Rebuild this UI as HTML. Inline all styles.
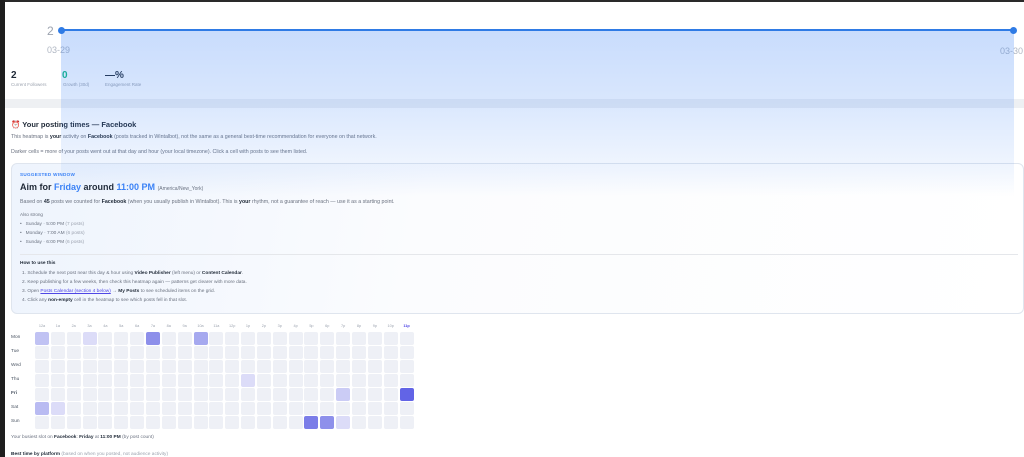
<!DOCTYPE html>
<html><head><meta charset="utf-8"><style>
*{margin:0;padding:0;box-sizing:border-box}
body{width:1024px;height:457px;overflow:hidden;background:#fff;font-family:"Liberation Sans",sans-serif;color:#374151;position:relative}
.a{position:absolute;white-space:nowrap}
.s{font-size:5.3px;color:#6b7280}
b{color:#1f2937}
.cell{position:absolute;width:14px;height:13px;border-radius:2px;background:#eef0f6}
</style></head><body>
<div class="a" style="left:0;top:0;width:1024px;height:2px;background:#2a2a2a"></div>
<div class="a" style="left:0;top:0;width:5px;height:457px;background:#1e1e1e"></div>
<div class="a" style="left:5px;top:99px;width:1019px;height:9px;background:#eef0f3"></div>

<div class="a" style="left:47px;top:24px;font-size:12px;color:#9ca3af">2</div>
<div class="a" style="left:47px;top:45px;font-size:9px;color:#b0b7c3">03-29</div>
<div class="a" style="left:1000px;top:46px;font-size:9px;color:#b0b7c3">03-30</div>

<div class="a" style="left:11px;top:70px;font-size:10px;font-weight:bold;color:#1f2937">2</div>
<div class="a" style="left:62px;top:70px;font-size:10px;font-weight:bold;color:#10b981">0</div>
<div class="a" style="left:105px;top:70px;font-size:10px;font-weight:bold;color:#1f2937">—%</div>
<div class="a s" style="left:11px;top:82px;font-size:4.5px;color:#9ca3af">Current Followers</div>
<div class="a s" style="left:63px;top:82px;font-size:4.5px;color:#9ca3af">Growth (30d)</div>
<div class="a s" style="left:105px;top:82px;font-size:4.5px;color:#9ca3af">Engagement Rate</div>

<div class="a" style="left:11px;top:120px;font-size:7.5px;font-weight:bold;color:#1f2937"><span style="color:#e11d48">⏰</span> Your posting times — Facebook</div>
<div class="a s" style="left:11px;top:134px">This heatmap is <b>your</b> activity on <b>Facebook</b> (posts tracked in Wintalbot), not the same as a general best-time recommendation for everyone on that network.</div>
<div class="a s" style="left:11px;top:149px">Darker cells = more of your posts went out at that day and hour (your local timezone). Click a cell with posts to see them listed.</div>

<div class="a" style="left:11px;top:163px;width:1013px;height:151px;border:1px solid #dfe5ee;border-radius:6px;background:linear-gradient(100deg,#eef4fd,#fbfcfe 40%,#fff)"></div>
<div class="a" style="left:20px;top:172px;font-size:4.6px;font-weight:bold;color:#3b82f6;letter-spacing:.3px">SUGGESTED WINDOW</div>
<div class="a" style="left:20px;top:182px;font-size:9px;font-weight:bold;color:#1f2937">Aim for <span style="color:#3b82f6">Friday</span> around <span style="color:#3b82f6">11:00 PM</span> <span style="font-size:5px;font-weight:normal;color:#6b7280">(America/New_York)</span></div>
<div class="a s" style="left:20px;top:199px">Based on <b>45</b> posts we counted for <b>Facebook</b> (when you usually publish in Wintalbot). This is <b>your</b> rhythm, not a guarantee of reach — use it as a starting point.</div>
<div class="a s" style="left:20px;top:212px;font-size:4.6px">Also strong</div>
<div class="a s" style="left:20px;top:222px;font-size:4.8px">•&nbsp;&nbsp; Sunday · 5:00 PM <span style="color:#9ca3af">(7 posts)</span></div>
<div class="a s" style="left:20px;top:231px;font-size:4.8px">•&nbsp;&nbsp; Monday · 7:00 AM <span style="color:#9ca3af">(6 posts)</span></div>
<div class="a s" style="left:20px;top:240px;font-size:4.8px">•&nbsp;&nbsp; Sunday · 6:00 PM <span style="color:#9ca3af">(6 posts)</span></div>
<div class="a" style="left:20px;top:254px;width:998px;height:1px;background:#e5e7eb"></div>
<div class="a" style="left:20px;top:261px;font-size:4.8px;font-weight:bold;color:#1f2937">How to use this</div>
<div class="a s" style="left:22px;top:271px;font-size:4.8px">1. Schedule the next post near this day &amp; hour using <b>Video Publisher</b> (left menu) or <b>Content Calendar</b>.</div>
<div class="a s" style="left:22px;top:280px;font-size:4.8px">2. Keep publishing for a few weeks, then check this heatmap again — patterns get clearer with more data.</div>
<div class="a s" style="left:22px;top:289px;font-size:4.8px">3. Open <span style="color:#4f46e5;text-decoration:underline">Posts Calendar (section 4 below)</span> → <b>My Posts</b> to see scheduled items on the grid.</div>
<div class="a s" style="left:22px;top:298px;font-size:4.8px">4. Click any <b>non-empty</b> cell in the heatmap to see which posts fell in that slot.</div>

<div id="hm"></div>
<div class="a s" style="left:11px;top:435px;font-size:4.8px">Your busiest slot on <b>Facebook</b>: <b>Friday</b> at <b>11:00 PM</b> (by post count)</div>
<div class="a s" style="left:11px;top:452px;font-size:4.8px"><b>Best time by platform</b> <span style="color:#9ca3af">(based on when you posted, not audience activity)</span></div>

<div class="a" style="left:61px;top:30px;width:953px;height:166px;background:linear-gradient(rgba(59,130,246,.28),rgba(59,130,246,.2) 40%,rgba(59,130,246,.07) 85%,rgba(59,130,246,0))"></div>
<div class="a" style="left:61px;top:29px;width:953px;height:2px;background:#2f7be5"></div>
<div class="a" style="left:58px;top:27px;width:7px;height:7px;border-radius:50%;background:#2f7be5"></div>
<div class="a" style="left:1010px;top:27px;width:7px;height:7px;border-radius:50%;background:#2f7be5"></div>

<script>
var h=document.getElementById('hm'),o='';
var hrs=['12a','1a','2a','3a','4a','5a','6a','7a','8a','9a','10a','11a','12p','1p','2p','3p','4p','5p','6p','7p','8p','9p','10p','11p'];
var days=['Mon','Tue','Wed','Thu','Fri','Sat','Sun'];
var hot={'0,0':'#c0c2f3','0,3':'#dcdcf8','0,7':'#8d8fea','0,10':'#a6a9ef','3,13':'#dcdcf8','4,19':'#cbccf5','4,23':'#6264e6','5,0':'#b9bbf2','5,1':'#dcdcf8','6,17':'#7b7de8','6,18':'#8e90eb','6,19':'#dcdcf8'};
for(var c=0;c<24;c++)o+='<div class="a" style="left:'+(35+c*15.85)+'px;top:324px;width:14px;text-align:center;font-size:3.8px;color:'+(c==23?'#4f46e5;font-weight:bold':'#9ca3af')+'">'+hrs[c]+'</div>';
for(var r=0;r<7;r++){o+='<div class="a" style="left:11px;top:'+(335+r*14)+'px;font-size:4.8px;color:#4b5563'+(r==4?';font-weight:bold':'')+'">'+days[r]+'</div>';
for(var c=0;c<24;c++){var k=r+','+c;o+='<div class="cell" style="left:'+(35+c*15.85)+'px;top:'+(332+r*14)+'px'+(hot[k]?';background:'+hot[k]:'')+'"></div>';}}
h.innerHTML=o;
</script>
</body></html>
